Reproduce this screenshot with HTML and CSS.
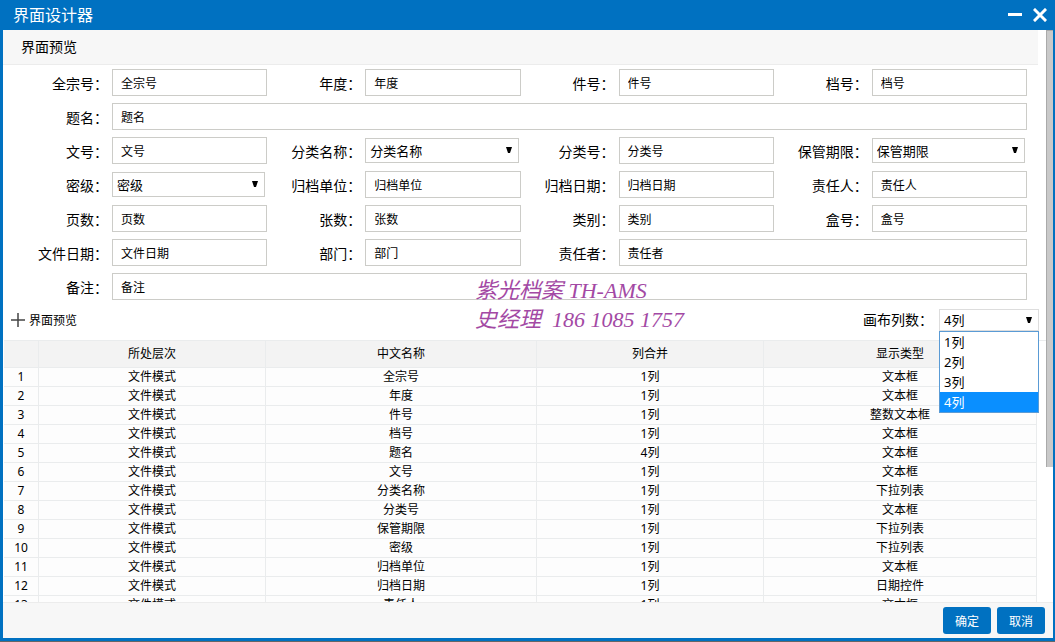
FILE: index.html
```html
<!DOCTYPE html>
<html lang="zh-CN">
<head>
<meta charset="utf-8">
<title>界面设计器</title>
<link rel="stylesheet" href="styles.css">
</head>
<body>
<div class="dialog">
  <header class="titlebar">
    <h1 class="title">界面设计器</h1>
    <button class="win-btn" type="button" aria-label="最小化"><svg width="14" height="14" viewBox="0 0 14 14"><rect x="0" y="5" width="14" height="3" fill="#fff"/></svg></button>
    <button class="win-btn" type="button" aria-label="关闭"><svg width="14" height="14" viewBox="0 0 14 14"><path d="M2 2L12 12M12 2L2 12" stroke="#fff" stroke-width="3" stroke-linecap="square"/></svg></button>
  </header>

  <main class="content">
    <h2 class="section-title">界面预览</h2>
    <form class="form">
      <div class="field"><label for="f1">全宗号：</label><input id="f1" type="text" value="全宗号"></div>
      <div class="field"><label for="f2">年度：</label><input id="f2" type="text" value="年度"></div>
      <div class="field"><label for="f3">件号：</label><input id="f3" type="text" value="件号"></div>
      <div class="field"><label for="f4">档号：</label><input id="f4" type="text" value="档号"></div>

      <div class="field span4"><label for="f5">题名：</label><input id="f5" type="text" value="题名"></div>

      <div class="field"><label for="f6">文号：</label><input id="f6" type="text" value="文号"></div>
      <div class="field"><label for="f7">分类名称：</label><span class="pick"><select id="f7"><option>分类名称</option></select><svg class="arrow" viewBox="0 0 6 6"><path d="M0 0H6L4 6H2Z"/></svg></span></div>
      <div class="field"><label for="f8">分类号：</label><input id="f8" type="text" value="分类号"></div>
      <div class="field"><label for="f9">保管期限：</label><span class="pick"><select id="f9"><option>保管期限</option></select><svg class="arrow" viewBox="0 0 6 6"><path d="M0 0H6L4 6H2Z"/></svg></span></div>

      <div class="field"><label for="f10">密级：</label><span class="pick"><select id="f10"><option>密级</option></select><svg class="arrow" viewBox="0 0 6 6"><path d="M0 0H6L4 6H2Z"/></svg></span></div>
      <div class="field"><label for="f11">归档单位：</label><input id="f11" type="text" value="归档单位"></div>
      <div class="field"><label for="f12">归档日期：</label><input id="f12" type="text" value="归档日期"></div>
      <div class="field"><label for="f13">责任人：</label><input id="f13" type="text" value="责任人"></div>

      <div class="field"><label for="f14">页数：</label><input id="f14" type="text" value="页数"></div>
      <div class="field"><label for="f15">张数：</label><input id="f15" type="text" value="张数"></div>
      <div class="field"><label for="f16">类别：</label><input id="f16" type="text" value="类别"></div>
      <div class="field"><label for="f17">盒号：</label><input id="f17" type="text" value="盒号"></div>

      <div class="field"><label for="f18">文件日期：</label><input id="f18" type="text" value="文件日期"></div>
      <div class="field"><label for="f19">部门：</label><input id="f19" type="text" value="部门"></div>
      <div class="field span2"><label for="f20">责任者：</label><input id="f20" type="text" value="责任者"></div>

      <div class="field span4"><label for="f21">备注：</label><input id="f21" type="text" value="备注"></div>
    </form>

    <div class="toolbar">
      <button class="add" type="button"><svg width="14" height="14" viewBox="0 0 14 14"><path d="M0 7H14M7 0V14" stroke="#444" stroke-width="1.5"/></svg>界面预览</button>
      <label class="columns-label" for="cols">画布列数：</label>
      <div class="pick columns">
        <select id="cols"><option>1列</option><option>2列</option><option>3列</option><option selected>4列</option></select>
        <svg class="arrow" viewBox="0 0 6 6"><path d="M0 0H6L4 6H2Z"/></svg>
        <ul class="menu" role="listbox" aria-label="画布列数">
          <li role="option">1列</li>
          <li role="option">2列</li>
          <li role="option">3列</li>
          <li role="option" class="active" aria-selected="true">4列</li>
        </ul>
      </div>
    </div>

    <div class="grid-wrap">
      <table class="grid">
        <colgroup><col class="c-no"><col class="c-side"><col class="c-name"><col class="c-side"><col></colgroup>
        <thead><tr><th></th><th>所处层次</th><th>中文名称</th><th>列合并</th><th>显示类型</th></tr></thead>
        <tbody>
          <tr><td>1</td><td>文件模式</td><td>全宗号</td><td>1列</td><td>文本框</td></tr>
          <tr><td>2</td><td>文件模式</td><td>年度</td><td>1列</td><td>文本框</td></tr>
          <tr><td>3</td><td>文件模式</td><td>件号</td><td>1列</td><td>整数文本框</td></tr>
          <tr><td>4</td><td>文件模式</td><td>档号</td><td>1列</td><td>文本框</td></tr>
          <tr><td>5</td><td>文件模式</td><td>题名</td><td>4列</td><td>文本框</td></tr>
          <tr><td>6</td><td>文件模式</td><td>文号</td><td>1列</td><td>文本框</td></tr>
          <tr><td>7</td><td>文件模式</td><td>分类名称</td><td>1列</td><td>下拉列表</td></tr>
          <tr><td>8</td><td>文件模式</td><td>分类号</td><td>1列</td><td>文本框</td></tr>
          <tr><td>9</td><td>文件模式</td><td>保管期限</td><td>1列</td><td>下拉列表</td></tr>
          <tr><td>10</td><td>文件模式</td><td>密级</td><td>1列</td><td>下拉列表</td></tr>
          <tr><td>11</td><td>文件模式</td><td>归档单位</td><td>1列</td><td>文本框</td></tr>
          <tr><td>12</td><td>文件模式</td><td>归档日期</td><td>1列</td><td>日期控件</td></tr>
          <tr><td>13</td><td>文件模式</td><td>责任人</td><td>1列</td><td>文本框</td></tr>
        </tbody>
      </table>
    </div>

    <div class="scrollbar"></div>
    <p class="watermark">紫光档案 TH-AMS<br>史经理  186 1085 1757</p>
  </main>

  <footer class="footer">
    <button class="btn" type="button">确定</button>
    <button class="btn" type="button">取消</button>
  </footer>
</div>
</body>
</html>
```
FILE: styles.css
```css
* { box-sizing: border-box; }

body {
  margin: 0;
  font-family: "Noto Sans", "Noto Sans CJK SC", sans-serif;
  font-size: 12px;
  color: #000;
  background: #fff;
}

button, input, select { font-family: inherit; color: inherit; margin: 0; }

.dialog {
  display: flex;
  flex-direction: column;
  height: 100vh;
  border-bottom: 1px solid #666;
  background: #0071c1;
}

.titlebar {
  display: flex;
  align-items: center;
  gap: 11px;
  height: 30px;
  padding: 0 8px 0 13px;
  color: #fff;
}

.title {
  flex: 1;
  margin: 0;
  font-size: 16px;
  font-weight: 400;
  line-height: 30px;
}

.win-btn {
  display: flex;
  padding: 0;
  border: 0;
  background: none;
}

.content {
  position: relative;
  flex: 1;
  min-height: 0;
  margin: 0 2px 0 3px;
  overflow: hidden;
  background: #fff;
}

.section-title {
  margin: 0 15px 0 0;
  padding: 0 18px;
  border-bottom: 1px solid #ececec;
  background: #f7f7f7;
  font-size: 14px;
  font-weight: 400;
  line-height: 34px;
}

.form {
  display: grid;
  grid-template-columns: repeat(4, minmax(0, 1fr));
  row-gap: 7px;
  padding: 4px 26px 9px 11px;
}

.field { display: flex; align-items: center; height: 27px; }
.span2 { grid-column: span 2; }
.span4 { grid-column: span 4; }

.field label {
  flex: none;
  width: 94px;
  margin-right: 4px;
  padding-top: 3px;
  font-size: 14px;
  line-height: 24px;
  text-align: right;
}

.field input {
  flex: 1;
  min-width: 0;
  height: 27px;
  padding: 0 8px;
  border: 1px solid #ccccc8;
  border-radius: 0;
  background: #fff;
  font-size: 12px;
}

.pick { position: relative; display: flex; flex: 1; margin-right: 2px; }

.pick select {
  width: 100%;
  height: 25px;
  padding: 0 4px;
  appearance: none;
  border: 1px solid #ccccc8;
  border-radius: 0;
  background: #fff;
  font-size: 13px;
}

.arrow {
  position: absolute;
  top: 9px;
  right: 7px;
  width: 6px;
  height: 6px;
  pointer-events: none;
}

.toolbar {
  display: flex;
  align-items: center;
  height: 22px;
  margin-bottom: 9px;
  padding: 0 14px 0 8px;
}

.add {
  display: flex;
  align-items: center;
  gap: 4px;
  margin-right: auto;
  padding: 0;
  border: 0;
  background: none;
  font-size: 12px;
}

.columns-label { margin-right: 6px; font-size: 14px; line-height: 22px; }

.columns { flex: none; width: 100px; margin: 0; }
.columns select { height: 22px; border-color: #ddd; }
.columns .arrow { top: 8px; }

.menu {
  position: absolute;
  z-index: 2;
  top: 22px;
  left: 0;
  right: 0;
  margin: 0;
  padding: 0;
  border: 1px solid #5a9bd5;
  background: #fff;
  list-style: none;
  font-size: 13px;
}
.menu li { padding: 0 4px; line-height: 20px; }
.menu .active { background: #0a8fff; color: #fff; }

.grid-wrap {
  margin: 0 7px 0 1px;
  padding-right: 9px;
  border-top: 1px solid #eaeced;
}

.grid {
  width: 100%;
  table-layout: fixed;
  border-collapse: separate;
  border-spacing: 0;
  background: #fdfdfd;
}
.c-no { width: 35px; }
.c-side { width: 22%; }
.c-name { width: 26.2%; }

.grid th, .grid td {
  height: 19px;
  padding: 0;
  border-right: 1px solid #eaeced;
  border-bottom: 1px solid #eaeced;
  font-weight: 400;
  line-height: 18px;
  text-align: center;
}
.grid th {
  height: 27px;
  background: #f3f3f3;
}

.scrollbar {
  position: absolute;
  top: 0;
  right: 0;
  width: 7px;
  height: 437px;
  border-left: 1px solid #aaa;
  border-top: 1px solid #aaa;
  background: #c9c9c9;
}

.watermark {
  position: absolute;
  top: 246px;
  left: 472px;
  margin: 0;
  color: #a349a4;
  font-family: "Liberation Serif", "Noto Sans CJK SC", serif;
  font-size: 22px;
  font-style: italic;
  font-weight: 400;
  line-height: 29px;
  white-space: pre;
  pointer-events: none;
}

.footer {
  display: flex;
  align-items: center;
  justify-content: flex-end;
  gap: 6px;
  height: 36px;
  margin: 0 2px 3px 3px;
  padding: 0 8px;
  border-top: 1px solid #ececec;
  background: #f7f7f7;
}

.btn {
  width: 48px;
  height: 27px;
  padding: 0;
  border: 0;
  border-radius: 3px;
  background: #0071c1;
  color: #fff;
  font-size: 12px;
}
```
